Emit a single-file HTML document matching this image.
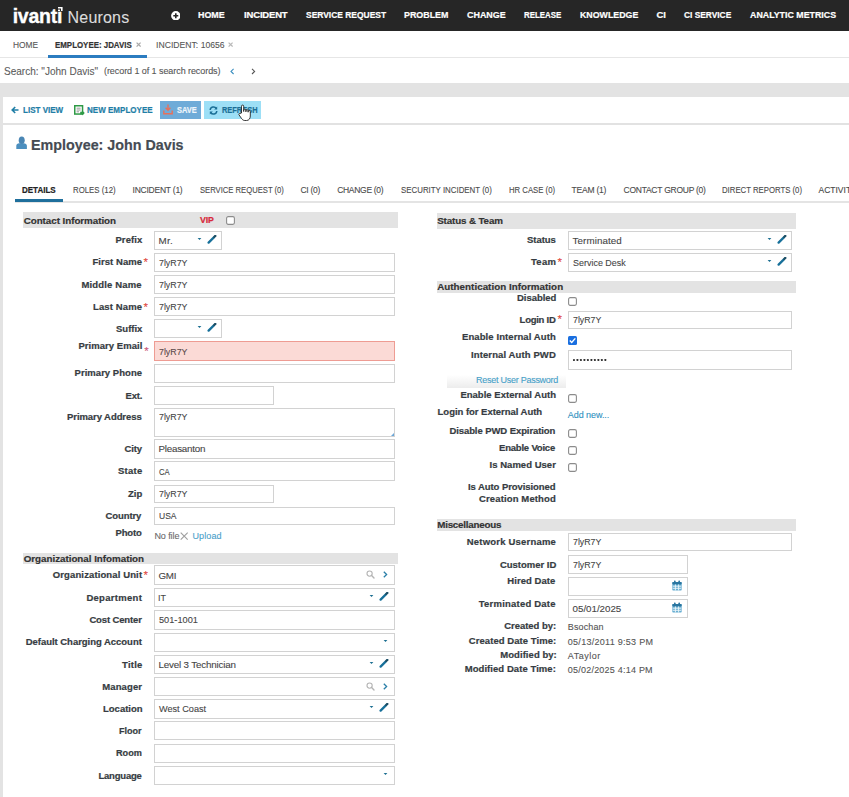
<!DOCTYPE html><html><head><meta charset="utf-8"><style>
html,body{margin:0;padding:0;width:849px;height:797px;overflow:hidden;background:#fff;font-family:"Liberation Sans", sans-serif;}
.t{position:absolute;white-space:nowrap;}
.b{position:absolute;box-sizing:border-box;}

</style></head><body>
<div class="b" style="left:0.0px;top:0.0px;width:849.0px;height:31.0px;background:#262626;"></div>
<div class="t" style="left:12.7px;top:6.2px;font-size:19.5px;line-height:20px;color:#fff;font-weight:bold;-webkit-text-stroke:0.2px currentColor;letter-spacing:-0.26px;-webkit-text-stroke:0.35px #fff;">ivant&#305;</div>
<svg class="b" style="left:58.2px;top:6.5px" width="4.6" height="4.6" viewBox="0 0 4.6 4.6"><path d="M0 0 H4.6 V4.6 H3 V1.6 H0Z" fill="#fff"/><rect x="0" y="2.6" width="2" height="2" fill="#fff"/></svg>
<div class="t" style="left:67.6px;top:8.5px;font-size:16px;line-height:18px;color:#dcdcdc;-webkit-text-stroke:0.1px currentColor;letter-spacing:0.18px;">Neurons</div>
<svg class="b" style="left:170.6px;top:10.6px" width="9.6" height="9.6" viewBox="0 0 9.6 9.6"><circle cx="4.8" cy="4.8" r="4.7" fill="#fff"/><path d="M4.8 2.3 V7.3 M2.3 4.8 H7.3" stroke="#262626" stroke-width="1.6"/></svg>
<div class="t" style="left:197.9px;top:9.3px;font-size:9.5px;line-height:12px;color:#fff;font-weight:bold;-webkit-text-stroke:0.2px currentColor;transform:scaleX(0.938);transform-origin:0.0px 0;">HOME</div>
<div class="t" style="left:244.1px;top:9.3px;font-size:9.5px;line-height:12px;color:#fff;font-weight:bold;-webkit-text-stroke:0.2px currentColor;letter-spacing:-0.19px;">INCIDENT</div>
<div class="t" style="left:305.5px;top:9.3px;font-size:9.5px;line-height:12px;color:#fff;font-weight:bold;-webkit-text-stroke:0.2px currentColor;transform:scaleX(0.889);transform-origin:0.0px 0;">SERVICE REQUEST</div>
<div class="t" style="left:403.5px;top:9.3px;font-size:9.5px;line-height:12px;color:#fff;font-weight:bold;-webkit-text-stroke:0.2px currentColor;transform:scaleX(0.936);transform-origin:0.0px 0;">PROBLEM</div>
<div class="t" style="left:466.5px;top:9.3px;font-size:9.5px;line-height:12px;color:#fff;font-weight:bold;-webkit-text-stroke:0.2px currentColor;transform:scaleX(0.939);transform-origin:0.0px 0;">CHANGE</div>
<div class="t" style="left:523.5px;top:9.3px;font-size:9.5px;line-height:12px;color:#fff;font-weight:bold;-webkit-text-stroke:0.2px currentColor;transform:scaleX(0.833);transform-origin:0.0px 0;">RELEASE</div>
<div class="t" style="left:579.5px;top:9.3px;font-size:9.5px;line-height:12px;color:#fff;font-weight:bold;-webkit-text-stroke:0.2px currentColor;transform:scaleX(0.929);transform-origin:0.0px 0;">KNOWLEDGE</div>
<div class="t" style="left:656.5px;top:9.3px;font-size:9.5px;line-height:12px;color:#fff;font-weight:bold;-webkit-text-stroke:0.2px currentColor;">CI</div>
<div class="t" style="left:683.5px;top:9.3px;font-size:9.5px;line-height:12px;color:#fff;font-weight:bold;-webkit-text-stroke:0.2px currentColor;transform:scaleX(0.880);transform-origin:0.0px 0;">CI SERVICE</div>
<div class="t" style="left:749.5px;top:9.3px;font-size:9.5px;line-height:12px;color:#fff;font-weight:bold;-webkit-text-stroke:0.2px currentColor;transform:scaleX(0.930);transform-origin:0.0px 0;">ANALYTIC METRICS</div>
<div class="b" style="left:0.0px;top:56.5px;width:849.0px;height:1.3px;background:#e6e6e6;"></div>
<div class="t" style="left:12.7px;top:38.7px;font-size:9.5px;line-height:12px;color:#555;-webkit-text-stroke:0.1px currentColor;transform:scaleX(0.882);transform-origin:0.0px 0;">HOME</div>
<div class="t" style="left:54.5px;top:38.7px;font-size:9.5px;line-height:12px;color:#333;font-weight:bold;-webkit-text-stroke:0.2px currentColor;transform:scaleX(0.832);transform-origin:0.0px 0;">EMPLOYEE: JDAVIS</div>
<svg class="b" style="left:135.6px;top:42.4px" width="5.2" height="5.2" viewBox="0 0 5.2 5.2"><path d="M0.6 0.6 L4.6 4.6 M4.6 0.6 L0.6 4.6" stroke="#a8a8a8" stroke-width="1.25"/></svg>
<div class="b" style="left:48.0px;top:55.0px;width:98.6px;height:2.5px;background:#2b7cc0;"></div>
<div class="t" style="left:155.6px;top:38.7px;font-size:9.5px;line-height:12px;color:#555;-webkit-text-stroke:0.1px currentColor;transform:scaleX(0.908);transform-origin:1.0px 0;">INCIDENT: 10656</div>
<svg class="b" style="left:228.1px;top:42.4px" width="5.2" height="5.2" viewBox="0 0 5.2 5.2"><path d="M0.6 0.6 L4.6 4.6 M4.6 0.6 L0.6 4.6" stroke="#b8b8b8" stroke-width="1.25"/></svg>
<div class="t" style="left:4.4px;top:63.6px;font-size:11.5px;line-height:14px;color:#5c5c5c;-webkit-text-stroke:0.1px currentColor;transform:scaleX(0.872);transform-origin:0.0px 0;">Search: "John Davis"</div>
<div class="t" style="left:104.0px;top:64.8px;font-size:9px;line-height:12px;color:#555;-webkit-text-stroke:0.1px currentColor;letter-spacing:-0.07px;">(record 1 of 1 search records)</div>
<svg class="b" style="left:229.6px;top:67.6px" width="5" height="7" viewBox="0 0 5 7"><path d="M3.6 0.8 L1 3.4 L3.6 6" fill="none" stroke="#3a8fc0" stroke-width="1.1"/></svg>
<svg class="b" style="left:251.2px;top:67.6px" width="5" height="7" viewBox="0 0 5 7"><path d="M1 0.8 L3.6 3.4 L1 6" fill="none" stroke="#555" stroke-width="1.1"/></svg>
<div class="b" style="left:0.0px;top:83.2px;width:849.0px;height:13.6px;background:#e3e3e3;"></div>
<div class="b" style="left:0.0px;top:96.8px;width:2.8px;height:700.2px;background:#e3e3e3;"></div>
<div class="b" style="left:3.0px;top:123.0px;width:846.0px;height:2.0px;background:#e2e2e2;"></div>
<svg class="b" style="left:10.5px;top:106.0px" width="8" height="8" viewBox="0 0 8 8"><path d="M7.5 4 H1.5 M4.2 1 L1.2 4 L4.2 7" fill="none" stroke="#1f7ea6" stroke-width="1.6"/></svg>
<div class="t" style="left:22.8px;top:104.3px;font-size:9px;line-height:12px;color:#1f7ea6;font-weight:bold;-webkit-text-stroke:0.2px currentColor;transform:scaleX(0.893);transform-origin:0.0px 0;">LIST VIEW</div>
<svg class="b" style="left:73.6px;top:105.2px" width="11" height="11" viewBox="0 0 11 11"><rect x="0.75" y="0.75" width="7.8" height="8.3" fill="#fff" stroke="#2f9a46" stroke-width="1.5"/><path d="M2.6 3.2 H6.6 M2.6 5 H6.6 M2.6 6.8 H5" stroke="#8c8c8c" stroke-width="0.9"/><path d="M6.2 6.8 H8.2 V5.6 L10.8 8 L8.2 10.4 V9.2 H6.2Z" fill="#2f9a46"/></svg>
<div class="t" style="left:86.9px;top:104.3px;font-size:9px;line-height:12px;color:#1f7ea6;font-weight:bold;-webkit-text-stroke:0.2px currentColor;transform:scaleX(0.893);transform-origin:0.0px 0;">NEW EMPLOYEE</div>
<div class="b" style="left:160.0px;top:101.0px;width:41.3px;height:18.0px;background:#6fabd8;"></div>
<svg class="b" style="left:163.0px;top:104.0px" width="10" height="11" viewBox="0 0 10 11"><path d="M5 0.5 V6 M2.6 3.8 L5 6.3 L7.4 3.8" fill="none" stroke="#e8705a" stroke-width="1.4"/><path d="M0.8 6.5 V9.8 H9.2 V6.5" fill="none" stroke="#e8705a" stroke-width="1.4"/></svg>
<div class="t" style="left:177.3px;top:104.3px;font-size:9px;line-height:12px;color:#eef5fb;font-weight:bold;-webkit-text-stroke:0.2px currentColor;transform:scaleX(0.829);transform-origin:0.0px 0;">SAVE</div>
<div class="b" style="left:204.4px;top:101.0px;width:56.6px;height:18.0px;background:#9ddff6;"></div>
<svg class="b" style="left:208.5px;top:105.5px" width="9" height="9" viewBox="0 0 9 9"><path d="M1.2 4 A3.3 3.3 0 0 1 7.3 2.5" fill="none" stroke="#1b6f96" stroke-width="1.5"/><path d="M8.2 0.6 L8.2 3.6 L5.2 3.6Z" fill="#1b6f96"/><path d="M7.8 5 A3.3 3.3 0 0 1 1.7 6.5" fill="none" stroke="#1b6f96" stroke-width="1.5"/><path d="M0.8 8.4 L0.8 5.4 L3.8 5.4Z" fill="#1b6f96"/></svg>
<div class="t" style="left:221.7px;top:104.3px;font-size:9px;line-height:12px;color:#1b6f96;font-weight:bold;-webkit-text-stroke:0.2px currentColor;transform:scaleX(0.826);transform-origin:0.0px 0;">REFRESH</div>
<svg class="b" style="left:238.2px;top:103.7px" width="14" height="18" viewBox="0 0 14 18"><path d="M3.5 9 V2.2 A1.1 1.1 0 0 1 5.7 2.2 V7.5 V6.2 A1.1 1.1 0 0 1 7.9 6.2 V7.8 V6.8 A1.1 1.1 0 0 1 10.1 6.8 V8.2 V7.6 A1.1 1.1 0 0 1 12.3 7.6 V12 C12.3 14.5 11 16.5 8.5 16.5 H6.8 C5.2 16.5 4.3 15.6 3.4 14.3 L1 10.8 C0.5 10 1.2 9.1 2.1 9.5 Z" fill="#fff" stroke="#222" stroke-width="0.9"/></svg>
<svg class="b" style="left:16.0px;top:136.0px" width="12" height="14" viewBox="0 0 12 14"><path d="M0.3 13 V9.8 C0.3 8 1.6 7.2 3.2 7.2 H7.8 C9.4 7.2 10.9 8 10.9 9.8 V13 Z" fill="#4b8fbf"/><ellipse cx="5.7" cy="4.2" rx="3" ry="3.8" fill="#4a86b4"/></svg>
<div class="t" style="left:30.8px;top:136.0px;font-size:15px;line-height:18px;color:#454b53;font-weight:bold;-webkit-text-stroke:0.2px currentColor;transform:scaleX(0.953);transform-origin:1.0px 0;">Employee: John Davis</div>
<div class="b" style="left:14.6px;top:201.0px;width:834.4px;height:1.5px;background:#e4e4e4;"></div>
<div class="b" style="left:14.6px;top:198.5px;width:48.0px;height:3.0px;background:#1f6f9c;"></div>
<div class="t" style="left:21.9px;top:183.6px;font-size:8.5px;line-height:12px;color:#222;font-weight:bold;-webkit-text-stroke:0.2px currentColor;transform:scaleX(0.942);transform-origin:0.0px 0;">DETAILS</div>
<div class="t" style="left:73.1px;top:183.6px;font-size:8.5px;line-height:12px;color:#4a4a4a;-webkit-text-stroke:0.1px currentColor;transform:scaleX(0.922);transform-origin:0.0px 0;">ROLES (12)</div>
<div class="t" style="left:132.5px;top:183.6px;font-size:8.5px;line-height:12px;color:#4a4a4a;-webkit-text-stroke:0.1px currentColor;letter-spacing:-0.23px;">INCIDENT (1)</div>
<div class="t" style="left:200.0px;top:183.6px;font-size:8.5px;line-height:12px;color:#4a4a4a;-webkit-text-stroke:0.1px currentColor;transform:scaleX(0.900);transform-origin:0.0px 0;">SERVICE REQUEST (0)</div>
<div class="t" style="left:300.5px;top:183.6px;font-size:8.5px;line-height:12px;color:#4a4a4a;-webkit-text-stroke:0.1px currentColor;letter-spacing:-0.30px;">CI (0)</div>
<div class="t" style="left:337.2px;top:183.6px;font-size:8.5px;line-height:12px;color:#4a4a4a;-webkit-text-stroke:0.1px currentColor;letter-spacing:-0.30px;">CHANGE (0)</div>
<div class="t" style="left:400.5px;top:183.6px;font-size:8.5px;line-height:12px;color:#4a4a4a;-webkit-text-stroke:0.1px currentColor;transform:scaleX(0.927);transform-origin:0.0px 0;">SECURITY INCIDENT (0)</div>
<div class="t" style="left:508.6px;top:183.6px;font-size:8.5px;line-height:12px;color:#4a4a4a;-webkit-text-stroke:0.1px currentColor;transform:scaleX(0.912);transform-origin:0.0px 0;">HR CASE (0)</div>
<div class="t" style="left:571.5px;top:183.6px;font-size:8.5px;line-height:12px;color:#4a4a4a;-webkit-text-stroke:0.1px currentColor;letter-spacing:-0.21px;">TEAM (1)</div>
<div class="t" style="left:623.5px;top:183.6px;font-size:8.5px;line-height:12px;color:#4a4a4a;-webkit-text-stroke:0.1px currentColor;letter-spacing:-0.25px;">CONTACT GROUP (0)</div>
<div class="t" style="left:722.0px;top:183.6px;font-size:8.5px;line-height:12px;color:#4a4a4a;-webkit-text-stroke:0.1px currentColor;transform:scaleX(0.914);transform-origin:0.0px 0;">DIRECT REPORTS (0)</div>
<div class="t" style="left:818.5px;top:183.6px;font-size:8.5px;line-height:12px;color:#444;-webkit-text-stroke:0.1px currentColor;">ACTIVITY HISTORY</div>
<div class="b" style="left:23.0px;top:212.3px;width:374.5px;height:16.0px;background:#e3e3e3;"></div>
<div class="t" style="left:23.7px;top:214.5px;font-size:9.8px;line-height:12px;color:#333;font-weight:bold;-webkit-text-stroke:0.2px currentColor;letter-spacing:-0.04px;">Contact Information</div>
<div class="t" style="left:200.0px;top:214.2px;font-size:8.8px;line-height:12px;color:#d8283c;font-weight:bold;-webkit-text-stroke:0.2px currentColor;letter-spacing:-0.10px;">VIP</div>
<svg class="b" style="left:226.0px;top:215.8px" width="9" height="9" viewBox="0 0 9 9"><rect x="0.6" y="0.6" width="7.8" height="7.8" rx="1.6" fill="#fff" stroke="#8c8c8c" stroke-width="1.1"/></svg>
<div class="b" style="left:154.0px;top:231.0px;width:68.4px;height:18.5px;background:#fff;border:1px solid #d2d2d2;"></div>
<div class="t" style="left:115.4px;top:234.2px;font-size:9.5px;line-height:12px;color:#363c42;font-weight:bold;-webkit-text-stroke:0.2px currentColor;letter-spacing:0.12px;">Prefix</div>
<div class="t" style="left:158.5px;top:234.6px;font-size:9.8px;line-height:12px;color:#454545;-webkit-text-stroke:0.1px currentColor;letter-spacing:0.25px;">Mr.</div>
<svg class="b" style="left:196.6px;top:236.8px" width="5" height="4" viewBox="0 0 5 4"><path d="M0.6 1 L4.4 1 L2.5 3.1Z" fill="#1d6f92"/></svg>
<svg class="b" style="left:207.2px;top:234.7px" width="10" height="9" viewBox="0 0 10 9"><path d="M1.6 7.6 L6.6 2.6" stroke="#17709a" stroke-width="2.3" stroke-linecap="round"/><path d="M7.2 2 L8.3 0.9" stroke="#1c4f66" stroke-width="2.3" stroke-linecap="round"/></svg>
<div class="b" style="left:154.0px;top:253.0px;width:240.5px;height:18.5px;background:#fff;border:1px solid #d2d2d2;"></div>
<div class="t" style="left:92.4px;top:256.2px;font-size:9.5px;line-height:12px;color:#363c42;font-weight:bold;-webkit-text-stroke:0.2px currentColor;letter-spacing:0.07px;">First Name</div>
<div class="t" style="left:143.6px;top:257.1px;font-size:11.5px;line-height:10px;color:#e0443a;-webkit-text-stroke:0.1px currentColor;">*</div>
<div class="t" style="left:158.5px;top:256.6px;font-size:9.8px;line-height:12px;color:#454545;-webkit-text-stroke:0.1px currentColor;transform:scaleX(0.900);transform-origin:0.0px 0;">7lyR7Y</div>
<div class="b" style="left:154.0px;top:275.0px;width:240.5px;height:19.0px;background:#fff;border:1px solid #d2d2d2;"></div>
<div class="t" style="left:81.4px;top:278.5px;font-size:9.5px;line-height:12px;color:#363c42;font-weight:bold;-webkit-text-stroke:0.2px currentColor;letter-spacing:0.16px;">Middle Name</div>
<div class="t" style="left:158.5px;top:278.8px;font-size:9.8px;line-height:12px;color:#454545;-webkit-text-stroke:0.1px currentColor;transform:scaleX(0.900);transform-origin:0.0px 0;">7lyR7Y</div>
<div class="b" style="left:154.0px;top:297.4px;width:240.5px;height:18.6px;background:#fff;border:1px solid #d2d2d2;"></div>
<div class="t" style="left:93.0px;top:300.7px;font-size:9.5px;line-height:12px;color:#363c42;font-weight:bold;-webkit-text-stroke:0.2px currentColor;letter-spacing:0.12px;">Last Name</div>
<div class="t" style="left:143.6px;top:301.5px;font-size:11.5px;line-height:10px;color:#e0443a;-webkit-text-stroke:0.1px currentColor;">*</div>
<div class="t" style="left:158.5px;top:301.0px;font-size:9.8px;line-height:12px;color:#454545;-webkit-text-stroke:0.1px currentColor;transform:scaleX(0.900);transform-origin:0.0px 0;">7lyR7Y</div>
<div class="b" style="left:154.0px;top:319.4px;width:68.4px;height:18.8px;background:#fff;border:1px solid #d2d2d2;"></div>
<div class="t" style="left:116.0px;top:322.8px;font-size:9.5px;line-height:12px;color:#363c42;font-weight:bold;-webkit-text-stroke:0.2px currentColor;">Suffix</div>
<svg class="b" style="left:196.6px;top:325.4px" width="5" height="4" viewBox="0 0 5 4"><path d="M0.6 1 L4.4 1 L2.5 3.1Z" fill="#1d6f92"/></svg>
<svg class="b" style="left:207.2px;top:323.2px" width="10" height="9" viewBox="0 0 10 9"><path d="M1.6 7.6 L6.6 2.6" stroke="#17709a" stroke-width="2.3" stroke-linecap="round"/><path d="M7.2 2 L8.3 0.9" stroke="#1c4f66" stroke-width="2.3" stroke-linecap="round"/></svg>
<div class="b" style="left:154.0px;top:363.6px;width:240.5px;height:19.4px;background:#fff;border:1px solid #d2d2d2;"></div>
<div class="t" style="left:74.6px;top:367.3px;font-size:9.5px;line-height:12px;color:#363c42;font-weight:bold;-webkit-text-stroke:0.2px currentColor;letter-spacing:0.03px;">Primary Phone</div>
<div class="b" style="left:154.0px;top:386.0px;width:119.6px;height:19.0px;background:#fff;border:1px solid #d2d2d2;"></div>
<div class="t" style="left:125.6px;top:389.5px;font-size:9.5px;line-height:12px;color:#363c42;font-weight:bold;-webkit-text-stroke:0.2px currentColor;letter-spacing:-0.20px;">Ext.</div>
<div class="b" style="left:154.0px;top:439.0px;width:240.5px;height:19.6px;background:#fff;border:1px solid #d2d2d2;"></div>
<div class="t" style="left:124.6px;top:442.8px;font-size:9.5px;line-height:12px;color:#363c42;font-weight:bold;-webkit-text-stroke:0.2px currentColor;letter-spacing:-0.20px;">City</div>
<div class="t" style="left:158.5px;top:443.1px;font-size:9.8px;line-height:12px;color:#454545;-webkit-text-stroke:0.1px currentColor;letter-spacing:-0.23px;">Pleasanton</div>
<div class="b" style="left:154.0px;top:461.4px;width:240.5px;height:19.6px;background:#fff;border:1px solid #d2d2d2;"></div>
<div class="t" style="left:118.0px;top:465.2px;font-size:9.5px;line-height:12px;color:#363c42;font-weight:bold;-webkit-text-stroke:0.2px currentColor;letter-spacing:0.25px;">State</div>
<div class="t" style="left:158.5px;top:465.5px;font-size:9.8px;line-height:12px;color:#454545;-webkit-text-stroke:0.1px currentColor;transform:scaleX(0.786);transform-origin:0.0px 0;">CA</div>
<div class="b" style="left:154.0px;top:484.6px;width:119.6px;height:18.4px;background:#fff;border:1px solid #d2d2d2;"></div>
<div class="t" style="left:128.0px;top:487.8px;font-size:9.5px;line-height:12px;color:#363c42;font-weight:bold;-webkit-text-stroke:0.2px currentColor;">Zip</div>
<div class="t" style="left:158.5px;top:488.1px;font-size:9.8px;line-height:12px;color:#454545;-webkit-text-stroke:0.1px currentColor;transform:scaleX(0.900);transform-origin:0.0px 0;">7lyR7Y</div>
<div class="b" style="left:154.0px;top:506.6px;width:240.5px;height:18.8px;background:#fff;border:1px solid #d2d2d2;"></div>
<div class="t" style="left:105.6px;top:510.0px;font-size:9.5px;line-height:12px;color:#363c42;font-weight:bold;-webkit-text-stroke:0.2px currentColor;letter-spacing:-0.10px;">Country</div>
<div class="t" style="left:158.5px;top:510.3px;font-size:9.8px;line-height:12px;color:#454545;-webkit-text-stroke:0.1px currentColor;transform:scaleX(0.870);transform-origin:0.0px 0;">USA</div>
<div class="b" style="left:154.0px;top:565.4px;width:240.5px;height:19.6px;background:#fff;border:1px solid #d2d2d2;"></div>
<div class="t" style="left:52.8px;top:569.2px;font-size:9.5px;line-height:12px;color:#363c42;font-weight:bold;-webkit-text-stroke:0.2px currentColor;letter-spacing:0.12px;">Organizational Unit</div>
<div class="t" style="left:143.6px;top:570.0px;font-size:11.5px;line-height:10px;color:#e0443a;-webkit-text-stroke:0.1px currentColor;">*</div>
<div class="t" style="left:158.5px;top:569.5px;font-size:9.8px;line-height:12px;color:#454545;-webkit-text-stroke:0.1px currentColor;letter-spacing:-0.30px;">GMI</div>
<svg class="b" style="left:365.6px;top:570.2px" width="9" height="9" viewBox="0 0 9 9"><circle cx="3.6" cy="3.6" r="2.6" fill="none" stroke="#b4b4b4" stroke-width="1.1"/><path d="M5.6 5.6 L8 8" stroke="#b4b4b4" stroke-width="1.4" stroke-linecap="round"/></svg>
<svg class="b" style="left:383.0px;top:571.0px" width="5" height="7" viewBox="0 0 5 7"><path d="M0.8 0.8 L3.6 3.5 L0.8 6.2" fill="none" stroke="#2a7fa8" stroke-width="1.3"/></svg>
<div class="b" style="left:154.0px;top:588.0px;width:240.5px;height:19.4px;background:#fff;border:1px solid #d2d2d2;"></div>
<div class="t" style="left:86.4px;top:591.7px;font-size:9.5px;line-height:12px;color:#363c42;font-weight:bold;-webkit-text-stroke:0.2px currentColor;letter-spacing:0.29px;">Department</div>
<div class="t" style="left:157.5px;top:592.0px;font-size:9.8px;line-height:12px;color:#454545;-webkit-text-stroke:0.1px currentColor;transform:scaleX(0.913);transform-origin:1.0px 0;">IT</div>
<svg class="b" style="left:368.7px;top:594.3px" width="5" height="4" viewBox="0 0 5 4"><path d="M0.6 1 L4.4 1 L2.5 3.1Z" fill="#1d6f92"/></svg>
<svg class="b" style="left:379.3px;top:592.1px" width="10" height="9" viewBox="0 0 10 9"><path d="M1.6 7.6 L6.6 2.6" stroke="#17709a" stroke-width="2.3" stroke-linecap="round"/><path d="M7.2 2 L8.3 0.9" stroke="#1c4f66" stroke-width="2.3" stroke-linecap="round"/></svg>
<div class="b" style="left:154.0px;top:610.0px;width:240.5px;height:20.0px;background:#fff;border:1px solid #d2d2d2;"></div>
<div class="t" style="left:89.4px;top:614.0px;font-size:9.5px;line-height:12px;color:#363c42;font-weight:bold;-webkit-text-stroke:0.2px currentColor;letter-spacing:-0.14px;">Cost Center</div>
<div class="t" style="left:158.5px;top:614.3px;font-size:9.8px;line-height:12px;color:#454545;-webkit-text-stroke:0.1px currentColor;transform:scaleX(0.939);transform-origin:0.0px 0;">501-1001</div>
<div class="b" style="left:154.0px;top:632.6px;width:240.5px;height:19.4px;background:#fff;border:1px solid #d2d2d2;"></div>
<div class="t" style="left:25.7px;top:636.3px;font-size:9.5px;line-height:12px;color:#363c42;font-weight:bold;-webkit-text-stroke:0.2px currentColor;letter-spacing:-0.03px;">Default Charging Account</div>
<svg class="b" style="left:382.7px;top:638.9px" width="5" height="4" viewBox="0 0 5 4"><path d="M0.6 1 L4.4 1 L2.5 3.1Z" fill="#1d6f92"/></svg>
<div class="b" style="left:154.0px;top:654.8px;width:240.5px;height:19.5px;background:#fff;border:1px solid #d2d2d2;"></div>
<div class="t" style="left:122.0px;top:658.5px;font-size:9.5px;line-height:12px;color:#363c42;font-weight:bold;-webkit-text-stroke:0.2px currentColor;letter-spacing:0.25px;">Title</div>
<div class="t" style="left:158.5px;top:658.8px;font-size:9.8px;line-height:12px;color:#454545;-webkit-text-stroke:0.1px currentColor;letter-spacing:-0.17px;">Level 3 Technician</div>
<svg class="b" style="left:368.7px;top:661.1px" width="5" height="4" viewBox="0 0 5 4"><path d="M0.6 1 L4.4 1 L2.5 3.1Z" fill="#1d6f92"/></svg>
<svg class="b" style="left:379.3px;top:658.9px" width="10" height="9" viewBox="0 0 10 9"><path d="M1.6 7.6 L6.6 2.6" stroke="#17709a" stroke-width="2.3" stroke-linecap="round"/><path d="M7.2 2 L8.3 0.9" stroke="#1c4f66" stroke-width="2.3" stroke-linecap="round"/></svg>
<div class="b" style="left:154.0px;top:677.3px;width:240.5px;height:19.0px;background:#fff;border:1px solid #d2d2d2;"></div>
<div class="t" style="left:102.2px;top:680.8px;font-size:9.5px;line-height:12px;color:#363c42;font-weight:bold;-webkit-text-stroke:0.2px currentColor;letter-spacing:0.13px;">Manager</div>
<svg class="b" style="left:365.6px;top:681.8px" width="9" height="9" viewBox="0 0 9 9"><circle cx="3.6" cy="3.6" r="2.6" fill="none" stroke="#b4b4b4" stroke-width="1.1"/><path d="M5.6 5.6 L8 8" stroke="#b4b4b4" stroke-width="1.4" stroke-linecap="round"/></svg>
<svg class="b" style="left:383.0px;top:682.6px" width="5" height="7" viewBox="0 0 5 7"><path d="M0.8 0.8 L3.6 3.5 L0.8 6.2" fill="none" stroke="#2a7fa8" stroke-width="1.3"/></svg>
<div class="b" style="left:154.0px;top:699.0px;width:240.5px;height:19.5px;background:#fff;border:1px solid #d2d2d2;"></div>
<div class="t" style="left:103.0px;top:702.8px;font-size:9.5px;line-height:12px;color:#363c42;font-weight:bold;-webkit-text-stroke:0.2px currentColor;">Location</div>
<div class="t" style="left:158.5px;top:703.0px;font-size:9.8px;line-height:12px;color:#454545;-webkit-text-stroke:0.1px currentColor;transform:scaleX(0.933);transform-origin:0.0px 0;">West Coast</div>
<svg class="b" style="left:368.7px;top:705.4px" width="5" height="4" viewBox="0 0 5 4"><path d="M0.6 1 L4.4 1 L2.5 3.1Z" fill="#1d6f92"/></svg>
<svg class="b" style="left:379.3px;top:703.1px" width="10" height="9" viewBox="0 0 10 9"><path d="M1.6 7.6 L6.6 2.6" stroke="#17709a" stroke-width="2.3" stroke-linecap="round"/><path d="M7.2 2 L8.3 0.9" stroke="#1c4f66" stroke-width="2.3" stroke-linecap="round"/></svg>
<div class="b" style="left:154.0px;top:721.2px;width:240.5px;height:19.2px;background:#fff;border:1px solid #d2d2d2;"></div>
<div class="t" style="left:119.2px;top:724.8px;font-size:9.5px;line-height:12px;color:#363c42;font-weight:bold;-webkit-text-stroke:0.2px currentColor;transform:scaleX(0.950);transform-origin:0.0px 0;">Floor</div>
<div class="b" style="left:154.0px;top:743.7px;width:240.5px;height:18.9px;background:#fff;border:1px solid #d2d2d2;"></div>
<div class="t" style="left:116.0px;top:747.2px;font-size:9.5px;line-height:12px;color:#363c42;font-weight:bold;-webkit-text-stroke:0.2px currentColor;transform:scaleX(0.963);transform-origin:0.0px 0;">Room</div>
<div class="b" style="left:154.0px;top:766.2px;width:240.5px;height:18.9px;background:#fff;border:1px solid #d2d2d2;"></div>
<div class="t" style="left:98.4px;top:769.7px;font-size:9.5px;line-height:12px;color:#363c42;font-weight:bold;-webkit-text-stroke:0.2px currentColor;letter-spacing:-0.20px;">Language</div>
<svg class="b" style="left:382.7px;top:772.3px" width="5" height="4" viewBox="0 0 5 4"><path d="M0.6 1 L4.4 1 L2.5 3.1Z" fill="#1d6f92"/></svg>
<div class="b" style="left:154.0px;top:341.0px;width:240.5px;height:20.0px;background:#fbdad6;border:1px solid #ee9c93;"></div>
<div class="t" style="left:78.4px;top:340.3px;font-size:9.5px;line-height:12px;color:#363c42;font-weight:bold;-webkit-text-stroke:0.2px currentColor;letter-spacing:0.05px;">Primary Email</div>
<div class="t" style="left:144.2px;top:345.8px;font-size:11.5px;line-height:10px;color:#cc5577;-webkit-text-stroke:0.1px currentColor;">*</div>
<div class="t" style="left:158.5px;top:346.2px;font-size:9.8px;line-height:12px;color:#5a4848;-webkit-text-stroke:0.1px currentColor;transform:scaleX(0.900);transform-origin:0.0px 0;">7lyR7Y</div>
<div class="b" style="left:154.0px;top:408.0px;width:240.5px;height:28.5px;background:#fff;border:1px solid #d2d2d2;"></div>
<div class="t" style="left:67.0px;top:411.4px;font-size:9.5px;line-height:12px;color:#363c42;font-weight:bold;-webkit-text-stroke:0.2px currentColor;letter-spacing:-0.07px;">Primary Address</div>
<div class="t" style="left:158.5px;top:410.8px;font-size:9.8px;line-height:12px;color:#454545;-webkit-text-stroke:0.1px currentColor;transform:scaleX(0.900);transform-origin:0.0px 0;">7lyR7Y</div>
<svg class="b" style="left:391.0px;top:432.5px" width="3" height="3" viewBox="0 0 3 3"><path d="M3 0 L3 3 L0 3Z" fill="#6aa6d8"/></svg>
<div class="t" style="left:115.4px;top:527.0px;font-size:9.5px;line-height:12px;color:#363c42;font-weight:bold;-webkit-text-stroke:0.2px currentColor;letter-spacing:-0.10px;">Photo</div>
<div class="t" style="left:154.4px;top:530.0px;font-size:9px;line-height:12px;color:#6a6a6a;-webkit-text-stroke:0.1px currentColor;letter-spacing:-0.07px;">No file</div>
<svg class="b" style="left:180.3px;top:532.3px" width="8.4" height="8.4" viewBox="0 0 8.4 8.4"><path d="M0.7 0.7 L7.7 7.7 M7.7 0.7 L0.7 7.7" stroke="#a0a0a0" stroke-width="1.15"/></svg>
<div class="t" style="left:192.4px;top:530.3px;font-size:9px;line-height:12px;color:#4a9fca;-webkit-text-stroke:0.1px currentColor;letter-spacing:0.12px;">Upload</div>
<div class="b" style="left:23.0px;top:552.8px;width:374.5px;height:11.3px;background:#e3e3e3;"></div>
<div class="t" style="left:23.7px;top:552.7px;font-size:9.8px;line-height:12px;color:#333;font-weight:bold;-webkit-text-stroke:0.2px currentColor;letter-spacing:-0.02px;">Organizational Infomation</div>
<div class="b" style="left:436.5px;top:212.5px;width:359.0px;height:16.0px;background:#e3e3e3;"></div>
<div class="t" style="left:437.2px;top:214.7px;font-size:9.8px;line-height:12px;color:#333;font-weight:bold;-webkit-text-stroke:0.2px currentColor;letter-spacing:-0.13px;">Status &amp; Team</div>
<div class="b" style="left:567.5px;top:231.0px;width:224.8px;height:18.5px;background:#fff;border:1px solid #d2d2d2;"></div>
<div class="t" style="left:527.0px;top:234.2px;font-size:9.5px;line-height:12px;color:#363c42;font-weight:bold;-webkit-text-stroke:0.2px currentColor;letter-spacing:-0.04px;">Status</div>
<div class="t" style="left:572.6px;top:234.6px;font-size:9.8px;line-height:12px;color:#454545;-webkit-text-stroke:0.1px currentColor;letter-spacing:0.07px;">Terminated</div>
<svg class="b" style="left:767.3px;top:236.8px" width="5" height="4" viewBox="0 0 5 4"><path d="M0.6 1 L4.4 1 L2.5 3.1Z" fill="#1d6f92"/></svg>
<svg class="b" style="left:777.3px;top:234.7px" width="10" height="9" viewBox="0 0 10 9"><path d="M1.6 7.6 L6.6 2.6" stroke="#17709a" stroke-width="2.3" stroke-linecap="round"/><path d="M7.2 2 L8.3 0.9" stroke="#1c4f66" stroke-width="2.3" stroke-linecap="round"/></svg>
<div class="b" style="left:567.5px;top:253.0px;width:224.8px;height:18.5px;background:#fff;border:1px solid #d2d2d2;"></div>
<div class="t" style="left:531.0px;top:256.2px;font-size:9.5px;line-height:12px;color:#363c42;font-weight:bold;-webkit-text-stroke:0.2px currentColor;letter-spacing:0.27px;">Team</div>
<div class="t" style="left:557.4px;top:257.1px;font-size:11.5px;line-height:10px;color:#e0443a;-webkit-text-stroke:0.1px currentColor;">*</div>
<div class="t" style="left:572.6px;top:256.6px;font-size:9.8px;line-height:12px;color:#454545;-webkit-text-stroke:0.1px currentColor;transform:scaleX(0.914);transform-origin:0.0px 0;">Service Desk</div>
<svg class="b" style="left:767.3px;top:258.9px" width="5" height="4" viewBox="0 0 5 4"><path d="M0.6 1 L4.4 1 L2.5 3.1Z" fill="#1d6f92"/></svg>
<svg class="b" style="left:777.3px;top:256.6px" width="10" height="9" viewBox="0 0 10 9"><path d="M1.6 7.6 L6.6 2.6" stroke="#17709a" stroke-width="2.3" stroke-linecap="round"/><path d="M7.2 2 L8.3 0.9" stroke="#1c4f66" stroke-width="2.3" stroke-linecap="round"/></svg>
<div class="b" style="left:436.5px;top:281.0px;width:359.0px;height:11.6px;background:#e3e3e3;"></div>
<div class="t" style="left:437.2px;top:281.0px;font-size:9.8px;line-height:12px;color:#333;font-weight:bold;-webkit-text-stroke:0.2px currentColor;letter-spacing:0.03px;">Authentication Information</div>
<div class="t" style="left:517.0px;top:292.0px;font-size:9.5px;line-height:12px;color:#363c42;font-weight:bold;-webkit-text-stroke:0.2px currentColor;letter-spacing:-0.03px;">Disabled</div>
<svg class="b" style="left:567.6px;top:297.0px" width="9" height="9" viewBox="0 0 9 9"><rect x="0.6" y="0.6" width="7.8" height="7.8" rx="1.6" fill="#fff" stroke="#8c8c8c" stroke-width="1.1"/></svg>
<div class="b" style="left:567.5px;top:310.6px;width:224.8px;height:18.9px;background:#fff;border:1px solid #d2d2d2;"></div>
<div class="t" style="left:519.6px;top:313.6px;font-size:9.5px;line-height:12px;color:#363c42;font-weight:bold;-webkit-text-stroke:0.2px currentColor;letter-spacing:-0.26px;">Login ID</div>
<div class="t" style="left:557.4px;top:314.4px;font-size:11.5px;line-height:10px;color:#e0443a;-webkit-text-stroke:0.1px currentColor;">*</div>
<div class="t" style="left:572.6px;top:314.3px;font-size:9.8px;line-height:12px;color:#454545;-webkit-text-stroke:0.1px currentColor;transform:scaleX(0.897);transform-origin:0.0px 0;">7lyR7Y</div>
<div class="t" style="left:462.0px;top:331.2px;font-size:9.5px;line-height:12px;color:#363c42;font-weight:bold;-webkit-text-stroke:0.2px currentColor;letter-spacing:0.09px;">Enable Internal Auth</div>
<svg class="b" style="left:567.6px;top:336.3px" width="9" height="9" viewBox="0 0 9 9"><rect x="0" y="0" width="9" height="9" rx="1.5" fill="#1a6fe0"/><path d="M1.8 4.6 L3.7 6.5 L7.3 2.4" fill="none" stroke="#fff" stroke-width="1.4"/></svg>
<div class="b" style="left:567.5px;top:350.0px;width:224.8px;height:19.5px;background:#fff;border:1px solid #d2d2d2;"></div>
<div class="t" style="left:471.0px;top:348.5px;font-size:9.5px;line-height:12px;color:#363c42;font-weight:bold;-webkit-text-stroke:0.2px currentColor;letter-spacing:0.11px;">Internal Auth PWD</div>
<svg class="b" style="left:572.9px;top:358.9px" width="36" height="3" viewBox="0 0 36 3"><rect x="0.00" y="0" width="1.9" height="1.9" rx="0.4" fill="#333"/><rect x="3.49" y="0" width="1.9" height="1.9" rx="0.4" fill="#333"/><rect x="6.98" y="0" width="1.9" height="1.9" rx="0.4" fill="#333"/><rect x="10.47" y="0" width="1.9" height="1.9" rx="0.4" fill="#333"/><rect x="13.96" y="0" width="1.9" height="1.9" rx="0.4" fill="#333"/><rect x="17.45" y="0" width="1.9" height="1.9" rx="0.4" fill="#333"/><rect x="20.94" y="0" width="1.9" height="1.9" rx="0.4" fill="#333"/><rect x="24.43" y="0" width="1.9" height="1.9" rx="0.4" fill="#333"/><rect x="27.92" y="0" width="1.9" height="1.9" rx="0.4" fill="#333"/><rect x="31.41" y="0" width="1.9" height="1.9" rx="0.4" fill="#333"/></svg>
<div class="b" style="left:447.0px;top:375.0px;width:119.0px;height:13.0px;background:linear-gradient(#fff,#ececec);"></div>
<div class="t" style="left:476.0px;top:374.3px;font-size:9px;line-height:12px;color:#45a0c8;-webkit-text-stroke:0.1px currentColor;letter-spacing:-0.26px;">Reset User Password</div>
<div class="t" style="left:460.4px;top:388.8px;font-size:9.5px;line-height:12px;color:#363c42;font-weight:bold;-webkit-text-stroke:0.2px currentColor;letter-spacing:0.02px;">Enable External Auth</div>
<svg class="b" style="left:567.6px;top:393.8px" width="9" height="9" viewBox="0 0 9 9"><rect x="0.6" y="0.6" width="7.8" height="7.8" rx="1.6" fill="#fff" stroke="#8c8c8c" stroke-width="1.1"/></svg>
<div class="t" style="left:437.6px;top:405.5px;font-size:9.5px;line-height:12px;color:#363c42;font-weight:bold;-webkit-text-stroke:0.2px currentColor;letter-spacing:-0.03px;">Login for External Auth</div>
<div class="t" style="left:567.8px;top:408.6px;font-size:9px;line-height:12px;color:#2e90c0;-webkit-text-stroke:0.1px currentColor;letter-spacing:-0.06px;">Add new...</div>
<div class="t" style="left:449.4px;top:424.8px;font-size:9.5px;line-height:12px;color:#363c42;font-weight:bold;-webkit-text-stroke:0.2px currentColor;letter-spacing:-0.08px;">Disable PWD Expiration</div>
<svg class="b" style="left:567.6px;top:429.2px" width="9" height="9" viewBox="0 0 9 9"><rect x="0.6" y="0.6" width="7.8" height="7.8" rx="1.6" fill="#fff" stroke="#8c8c8c" stroke-width="1.1"/></svg>
<div class="t" style="left:499.0px;top:441.6px;font-size:9.5px;line-height:12px;color:#363c42;font-weight:bold;-webkit-text-stroke:0.2px currentColor;letter-spacing:-0.20px;">Enable Voice</div>
<svg class="b" style="left:567.6px;top:446.2px" width="9" height="9" viewBox="0 0 9 9"><rect x="0.6" y="0.6" width="7.8" height="7.8" rx="1.6" fill="#fff" stroke="#8c8c8c" stroke-width="1.1"/></svg>
<div class="t" style="left:489.6px;top:458.5px;font-size:9.5px;line-height:12px;color:#363c42;font-weight:bold;-webkit-text-stroke:0.2px currentColor;letter-spacing:0.02px;">Is Named User</div>
<svg class="b" style="left:567.6px;top:463.0px" width="9" height="9" viewBox="0 0 9 9"><rect x="0.6" y="0.6" width="7.8" height="7.8" rx="1.6" fill="#fff" stroke="#8c8c8c" stroke-width="1.1"/></svg>
<div class="t" style="left:468.0px;top:481.4px;font-size:9.5px;line-height:12px;color:#363c42;font-weight:bold;-webkit-text-stroke:0.2px currentColor;letter-spacing:-0.07px;">Is Auto Provisioned</div>
<div class="t" style="left:479.0px;top:493.4px;font-size:9.5px;line-height:12px;color:#363c42;font-weight:bold;-webkit-text-stroke:0.2px currentColor;letter-spacing:0.13px;">Creation Method</div>
<div class="b" style="left:436.5px;top:519.0px;width:359.0px;height:11.6px;background:#e3e3e3;"></div>
<div class="t" style="left:437.2px;top:519.0px;font-size:9.8px;line-height:12px;color:#333;font-weight:bold;-webkit-text-stroke:0.2px currentColor;letter-spacing:-0.22px;">Miscellaneous</div>
<div class="b" style="left:567.5px;top:532.6px;width:224.8px;height:18.9px;background:#fff;border:1px solid #d2d2d2;"></div>
<div class="t" style="left:466.7px;top:536.0px;font-size:9.5px;line-height:12px;color:#363c42;font-weight:bold;-webkit-text-stroke:0.2px currentColor;letter-spacing:0.21px;">Network Username</div>
<div class="t" style="left:572.6px;top:536.3px;font-size:9.8px;line-height:12px;color:#454545;-webkit-text-stroke:0.1px currentColor;transform:scaleX(0.897);transform-origin:0.0px 0;">7lyR7Y</div>
<div class="b" style="left:567.5px;top:555.0px;width:120.1px;height:19.0px;background:#fff;border:1px solid #d2d2d2;"></div>
<div class="t" style="left:499.9px;top:558.5px;font-size:9.5px;line-height:12px;color:#363c42;font-weight:bold;-webkit-text-stroke:0.2px currentColor;letter-spacing:-0.01px;">Customer ID</div>
<div class="t" style="left:572.6px;top:558.8px;font-size:9.8px;line-height:12px;color:#454545;-webkit-text-stroke:0.1px currentColor;transform:scaleX(0.897);transform-origin:0.0px 0;">7lyR7Y</div>
<div class="b" style="left:567.5px;top:577.2px;width:120.1px;height:19.1px;background:#fff;border:1px solid #d2d2d2;"></div>
<div class="t" style="left:507.3px;top:575.2px;font-size:9.5px;line-height:12px;color:#363c42;font-weight:bold;-webkit-text-stroke:0.2px currentColor;letter-spacing:0.06px;">Hired Date</div>
<svg class="b" style="left:671.6px;top:580.2px" width="10" height="11" viewBox="0 0 10 11"><rect x="0.3" y="2" width="9.4" height="8.6" rx="0.8" fill="#68aed2"/><rect x="0.3" y="2" width="9.4" height="2.4" rx="0.8" fill="#2a76a0"/><rect x="2" y="0.6" width="1.6" height="2.6" rx="0.6" fill="#2a76a0"/><rect x="6.4" y="0.6" width="1.6" height="2.6" rx="0.6" fill="#2a76a0"/><path d="M0.8 6.2 H9.2 M0.8 8.3 H9.2 M3.4 4.4 V10.4 M6.6 4.4 V10.4" stroke="#eef7fb" stroke-width="0.9"/></svg>
<div class="b" style="left:567.5px;top:599.2px;width:120.1px;height:19.3px;background:#fff;border:1px solid #d2d2d2;"></div>
<div class="t" style="left:478.8px;top:597.7px;font-size:9.5px;line-height:12px;color:#363c42;font-weight:bold;-webkit-text-stroke:0.2px currentColor;letter-spacing:0.21px;">Terminated Date</div>
<div class="t" style="left:572.6px;top:603.0px;font-size:9.8px;line-height:12px;color:#454545;-webkit-text-stroke:0.1px currentColor;letter-spacing:-0.04px;">05/01/2025</div>
<svg class="b" style="left:671.6px;top:602.4px" width="10" height="11" viewBox="0 0 10 11"><rect x="0.3" y="2" width="9.4" height="8.6" rx="0.8" fill="#68aed2"/><rect x="0.3" y="2" width="9.4" height="2.4" rx="0.8" fill="#2a76a0"/><rect x="2" y="0.6" width="1.6" height="2.6" rx="0.6" fill="#2a76a0"/><rect x="6.4" y="0.6" width="1.6" height="2.6" rx="0.6" fill="#2a76a0"/><path d="M0.8 6.2 H9.2 M0.8 8.3 H9.2 M3.4 4.4 V10.4 M6.6 4.4 V10.4" stroke="#eef7fb" stroke-width="0.9"/></svg>
<div class="t" style="left:504.3px;top:620.2px;font-size:9.5px;line-height:12px;color:#363c42;font-weight:bold;-webkit-text-stroke:0.2px currentColor;letter-spacing:-0.05px;">Created by:</div>
<div class="t" style="left:567.8px;top:621.2px;font-size:9px;line-height:12px;color:#555;-webkit-text-stroke:0.1px currentColor;letter-spacing:0.12px;">Bsochan</div>
<div class="t" style="left:468.8px;top:634.6px;font-size:9.5px;line-height:12px;color:#363c42;font-weight:bold;-webkit-text-stroke:0.2px currentColor;letter-spacing:0.06px;">Created Date Time:</div>
<div class="t" style="left:567.8px;top:635.6px;font-size:9px;line-height:12px;color:#555;-webkit-text-stroke:0.1px currentColor;letter-spacing:0.28px;">05/13/2011 9:53 PM</div>
<div class="t" style="left:500.3px;top:649.0px;font-size:9.5px;line-height:12px;color:#363c42;font-weight:bold;-webkit-text-stroke:0.2px currentColor;letter-spacing:0.05px;">Modified by:</div>
<div class="t" style="left:567.8px;top:650.0px;font-size:9px;line-height:12px;color:#555;-webkit-text-stroke:0.1px currentColor;letter-spacing:0.50px;">ATaylor</div>
<div class="t" style="left:464.7px;top:663.0px;font-size:9.5px;line-height:12px;color:#363c42;font-weight:bold;-webkit-text-stroke:0.2px currentColor;letter-spacing:0.06px;">Modified Date Time:</div>
<div class="t" style="left:567.8px;top:664.0px;font-size:9px;line-height:12px;color:#555;-webkit-text-stroke:0.1px currentColor;letter-spacing:0.22px;">05/02/2025 4:14 PM</div>
</body></html>
